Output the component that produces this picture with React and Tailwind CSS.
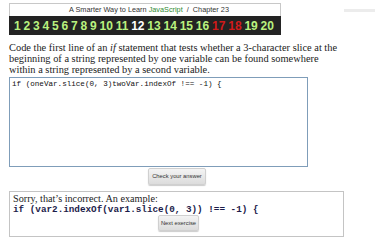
export default function App() {
  const nums = Array.from({ length: 20 }, (_, i) => i + 1);

  const numColor = (n) => {
    if (n === 12) return 'text-white';
    if (n === 17 || n === 18) return 'text-[#d11a1a]';
    return 'text-[#b9f27f]';
  };

  return (
    <div className="relative w-[375px] h-[250px] bg-white overflow-hidden">
      {/* faint mark top right */}
      <div className="absolute left-[344px] top-[9px] w-[31px] h-[3px] bg-[#ececec]" />

      <div className="pl-[9px] pt-[3px]">
        {/* chapter header */}
        <div className="w-[272px]">
          <div className="h-[13px] border border-[#c8c8c8] border-b-0 bg-white pl-[59px] leading-[12px] text-[7.3px] text-[#333] font-['Liberation_Sans',sans-serif] whitespace-pre">
            {'A Smarter Way to Learn '}
            <span className="text-[#2f8a2f]">JavaScript</span>
            {'  /  Chapter 23'}
          </div>
          <div className="h-[19px] bg-[#232323] flex items-center justify-between pl-[5px] pr-[7px] font-['Liberation_Sans',sans-serif] font-bold text-[12px] leading-none">
            {nums.map((n) => (
              <span key={n} className={numColor(n)}>
                {n}
              </span>
            ))}
          </div>
        </div>

        {/* instructions */}
        <p className="mt-[7px] h-[34px] w-[350px] font-['Liberation_Serif',serif] text-[10.4px] leading-[11px] text-[#222]">
          Code the first line of an <i>if</i> statement that tests whether a 3-character slice at the
          <br />
          beginning of a string represented by one variable can be found somewhere
          <br />
          within a string represented by a second variable.
        </p>

        {/* answer box */}
        <div className="mt-[1px] w-[299px] h-[90px] border border-[#7f9db9] bg-white px-[2px] pt-[1px] font-['Liberation_Mono',monospace] text-[7.6px] leading-[10px] text-[#111] whitespace-pre">
          {'if (oneVar.slice(0, 3)twoVar.indexOf !== -1) {'}
        </div>

        <div className="mt-[1px] ml-[139px] h-[17px]">
          <button className="h-[17px] w-[58px] rounded-[2px] bg-gradient-to-b from-[#f4f4f4] to-[#dcdcdc] border border-[#d0d0d0] shadow-[0_1px_1px_rgba(0,0,0,0.2)] font-['Liberation_Sans',sans-serif] text-[5.8px] text-[#333] align-top">
            Check your answer
          </button>
        </div>

        {/* feedback */}
        <div className="mt-[6px] w-[335px] h-[46px] border border-[#c4c4c4] px-[3px] pt-[2px]">
          <div className="h-[10px] font-['Liberation_Serif',serif] text-[10.2px] leading-[10px] text-[#222]">
            Sorry, that’s incorrect. An example:
          </div>
          <div className="h-[11px] font-['Liberation_Mono',monospace] font-bold text-[9.3px] leading-[11px] text-[#1c1c4a] whitespace-pre">
            {'if (var2.indexOf(var1.slice(0, 3)) !== -1) {'}
          </div>
          <div className="ml-[145px] h-[16px]">
            <button className="h-[16px] w-[41px] rounded-[2px] bg-gradient-to-b from-[#f4f4f4] to-[#dcdcdc] border border-[#d0d0d0] shadow-[0_1px_1px_rgba(0,0,0,0.2)] font-['Liberation_Sans',sans-serif] text-[5.8px] text-[#333] align-top">
              Next exercise
            </button>
          </div>
        </div>
      </div>
    </div>
  );
}
